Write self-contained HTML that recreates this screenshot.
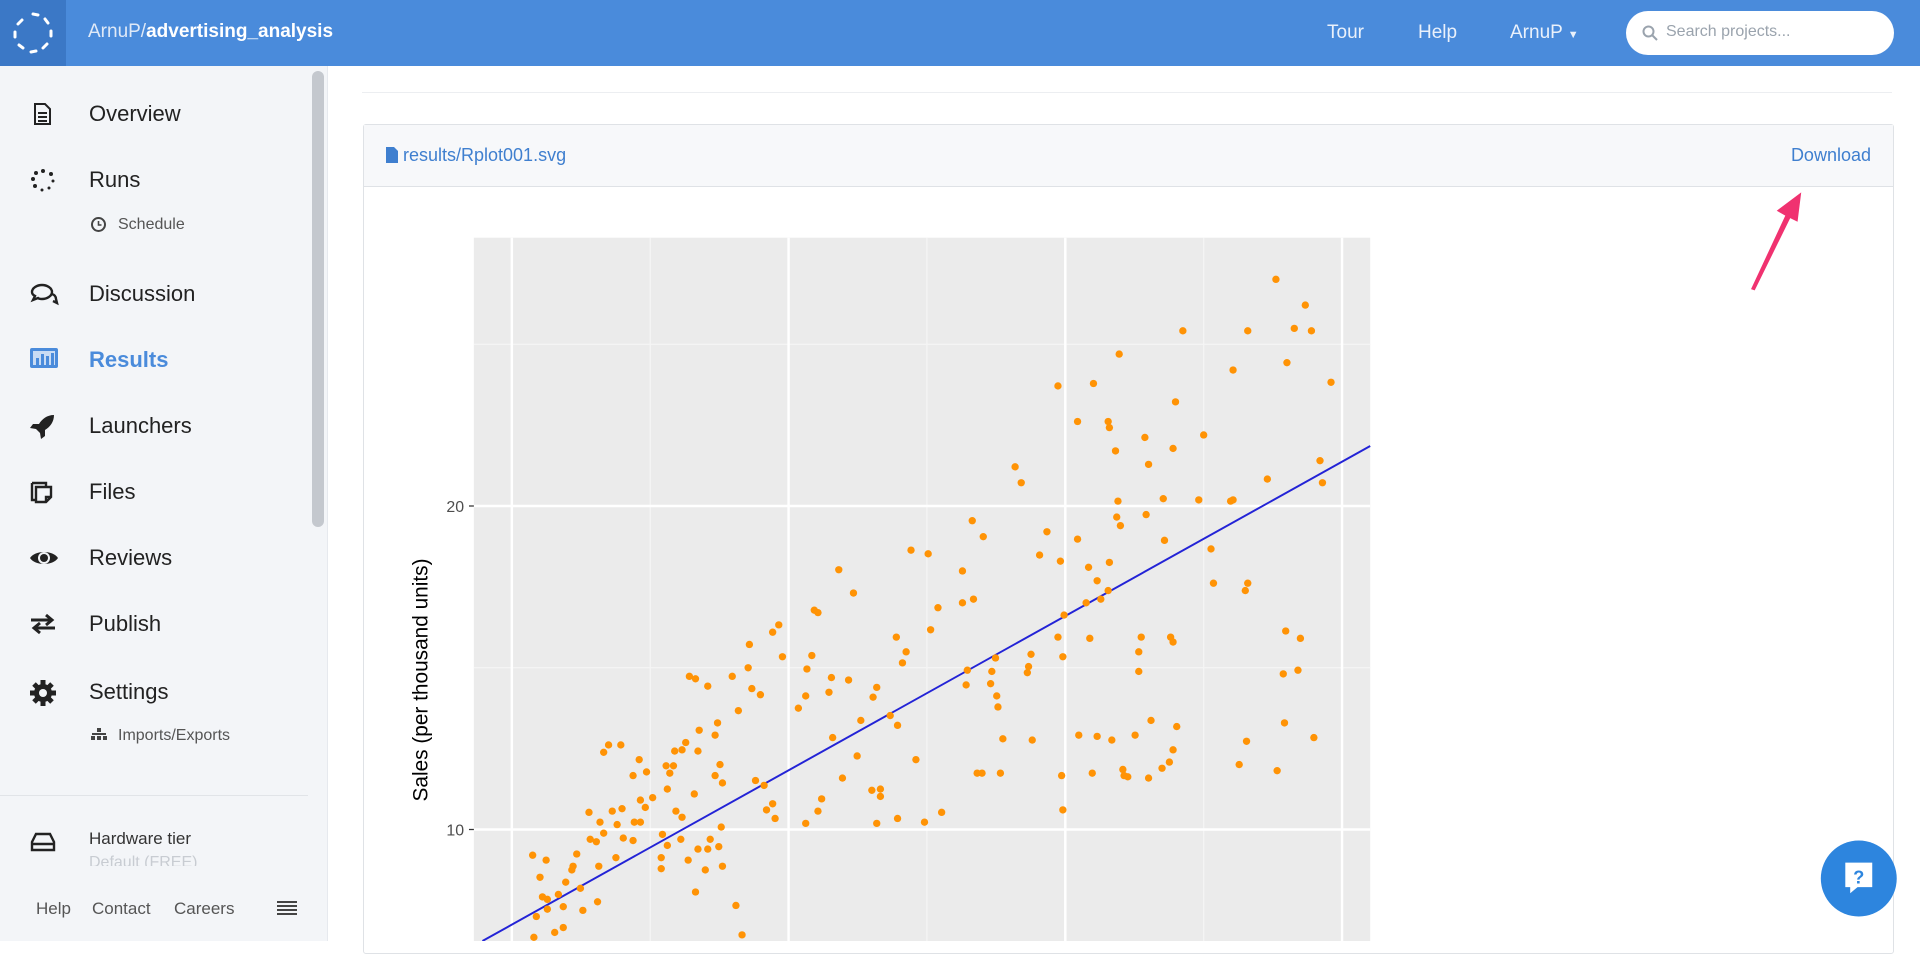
<!DOCTYPE html>
<html><head><meta charset="utf-8"><style>
*{margin:0;padding:0;box-sizing:border-box}
body{width:1920px;height:941px;overflow:hidden;background:#fff;font-family:"Liberation Sans",sans-serif;position:relative}
.hdr{position:absolute;left:0;top:0;width:1920px;height:66px;background:#4a8bdb}
.logo{position:absolute;left:0;top:0;width:66px;height:66px;background:#3b78c6}
.title{position:absolute;left:88px;top:21px;color:#dfe9f7;font-size:19px}
.title b{color:#fff}
.nav{position:absolute;top:22px;color:#eaf1fb;font-size:19px}
.search{position:absolute;left:1626px;top:11px;width:268px;height:44px;background:#fff;border-radius:22px;color:#9aa3ad;font-size:16px;padding:12px 0 0 40px}
.side{position:absolute;left:0;top:66px;width:328px;height:875px;background:#f3f5f8;border-right:1px solid #e6e9ee}
.scroll{position:absolute;left:312px;top:5px;width:12px;height:456px;background:#c4c8ce;border-radius:6px}
.item{position:absolute;left:89px;font-size:22px;color:#222}
.sub{position:absolute;left:118px;font-size:16px;color:#555}
.ic{position:absolute;left:28px}
.main-line{position:absolute;left:362px;top:92px;width:1530px;height:1px;background:#eceef1}
.card{position:absolute;left:363px;top:124px;width:1531px;height:830px;border:1px solid #dfe2e6;border-radius:3px}
.cardh{position:absolute;left:0;top:0;width:100%;height:62px;background:#f7f8fa;border-bottom:1px solid #dfe2e6}
.lnk{position:absolute;top:20px;color:#3f7fcf;font-size:18px}
</style></head><body>
<div class="hdr">
<div class="logo"><svg width="66" height="66" viewBox="0 0 66 66"><g stroke="#fff" stroke-width="3" stroke-linecap="round" fill="none"><path d="M33 14 l5 1M45 19 l3 4M51 31 l0 5M47 44 l-4 4M36 51 l-5 1M23 48 l-4-3M15 37 l0-5M18 24 l4-4"/></g></svg></div>
<div class="title">ArnuP/<b>advertising_analysis</b></div>
<div class="nav" style="left:1327px">Tour</div>
<div class="nav" style="left:1418px">Help</div>
<div class="nav" style="left:1510px">ArnuP <span style="font-size:11px">▼</span></div>
<div class="search"><svg style="position:absolute;left:16px;top:14px" width="16" height="16"><circle cx="6.5" cy="6.5" r="5" stroke="#9aa3ad" stroke-width="2" fill="none"/><path d="M10 10l5 5" stroke="#9aa3ad" stroke-width="2"/></svg>Search projects...</div>
</div>
<div class="side">
<div class="scroll"></div>
</div>
<svg class="ic" style="top:100px" width="28" height="28"><path d="M7 4h10l5 5v15H7z M10 13h9M10 17h9M10 21h9" stroke="#222" stroke-width="2" fill="none"/></svg>
<div class="item" style="top:101px">Overview</div>
<svg class="ic" style="top:167px" width="30" height="26"><g fill="#222"><circle cx="15" cy="4" r="2"/><circle cx="23" cy="7" r="2"/><circle cx="25" cy="14" r="1.5"/><circle cx="21" cy="21" r="1.5"/><circle cx="14" cy="23" r="1.5"/><circle cx="7" cy="19" r="2"/><circle cx="5" cy="12" r="2"/><circle cx="8" cy="6" r="2"/></g></svg>
<div class="item" style="top:167px">Runs</div>
<svg style="position:absolute;left:90px;top:216px" width="17" height="17"><circle cx="8.5" cy="8.5" r="6.5" stroke="#444" stroke-width="2" fill="none"/><path d="M8.5 5v4h3" stroke="#444" stroke-width="1.6" fill="none"/></svg>
<div class="sub" style="top:216px">Schedule</div>
<svg class="ic" style="top:282px" width="32" height="24"><path d="M4 10c0-4 5-7 10-7s10 3 10 7-5 7-10 7c-2 0-3 0-4-1l-5 2 2-4c-2-1-3-2-3-4z" stroke="#222" stroke-width="2.4" fill="none"/><path d="M24 12c3 1 4 3 4 5l1 4-4-2" stroke="#222" stroke-width="2.4" fill="none"/></svg>
<div class="item" style="top:281px">Discussion</div>
<svg class="ic" style="top:346px" width="32" height="26"><rect x="2" y="2" width="28" height="20" rx="2" fill="#4a8bdb"/><rect x="5" y="5" width="22" height="14" fill="#c9dcf4"/><g fill="#4a8bdb"><rect x="8" y="12" width="3" height="7"/><rect x="13" y="8" width="3" height="11"/><rect x="18" y="10" width="3" height="9"/><rect x="23" y="7" width="3" height="12"/></g></svg>
<div class="item" style="top:347px;color:#4a8bdb;font-weight:bold">Results</div>
<svg class="ic" style="top:412px" width="30" height="30"><path d="M26 3c-7 0-12 4-15 9H5l-3 4 6 1 4 4 1 6 4-3v-6c5-3 9-8 9-15z" fill="#222"/></svg>
<div class="item" style="top:413px">Launchers</div>
<svg class="ic" style="top:479px" width="28" height="28"><path d="M4 4h14v3M4 4v17h3M8 8h15v10l-5 5H8z M18 23v-5h5" stroke="#222" stroke-width="2.4" fill="none"/></svg>
<div class="item" style="top:479px">Files</div>
<svg class="ic" style="top:547px" width="32" height="22"><path d="M2 11C7 3 25 3 30 11 25 19 7 19 2 11z" fill="#222"/><circle cx="16" cy="11" r="6" fill="#f3f5f8"/><circle cx="16" cy="11" r="4" fill="#222"/></svg>
<div class="item" style="top:545px">Reviews</div>
<svg class="ic" style="top:612px" width="30" height="24"><path d="M3 8h20M18 3l6 5-6 5M27 16H7M12 11l-6 5 6 5" stroke="#222" stroke-width="3" fill="none"/></svg>
<div class="item" style="top:611px">Publish</div>
<svg class="ic" style="top:678px" width="30" height="30"><circle cx="15" cy="15" r="9" fill="#222"/><g stroke="#222" stroke-width="5"><path d="M15 2v26M2 15h26M6 6l18 18M24 6 6 24"/></g><circle cx="15" cy="15" r="4" fill="#f3f5f8"/></svg>
<div class="item" style="top:679px">Settings</div>
<svg style="position:absolute;left:90px;top:727px" width="18" height="16"><g fill="#444"><rect x="7" y="1" width="4" height="4"/><rect x="1" y="9" width="4" height="4"/><rect x="7" y="9" width="4" height="4"/><rect x="13" y="9" width="4" height="4"/><rect x="2" y="6" width="14" height="2"/></g></svg>
<div class="sub" style="top:727px">Imports/Exports</div>
<div style="position:absolute;left:0;top:795px;width:308px;height:1px;background:#e1e4e8"></div>
<svg class="ic" style="top:830px" width="30" height="24"><path d="M4 12l4-8h14l4 8v8H4z M4 14h22" stroke="#222" stroke-width="2.4" fill="none"/></svg>
<div style="position:absolute;left:89px;top:829px;font-size:17px;color:#333">Hardware tier</div>
<div style="position:absolute;left:89px;top:854px;font-size:16px;color:#c8ccd2;height:12px;overflow:hidden">Default (FREE)</div>
<div style="position:absolute;left:36px;top:899px;font-size:17px;color:#555">Help</div>
<div style="position:absolute;left:92px;top:899px;font-size:17px;color:#555">Contact</div>
<div style="position:absolute;left:174px;top:899px;font-size:17px;color:#555">Careers</div>
<svg style="position:absolute;left:277px;top:900px" width="20" height="16"><path d="M0 2h20M0 6h20M0 10h20M0 14h20" stroke="#444" stroke-width="2"/></svg>
<div class="main-line"></div>
<div class="card"><div class="cardh">
<div class="lnk" style="left:22px"><svg width="12" height="16" style="vertical-align:-2px"><path d="M0 0h8l4 4v12H0z" fill="#3f7fcf"/></svg> results/Rplot001.svg</div>
<div class="lnk" style="right:22px">Download</div>
</div></div>
<svg style="position:absolute;left:0;top:0" width="1920" height="941" viewBox="0 0 1568 768" preserveAspectRatio="none">
<rect x="387" y="194" width="732" height="580" fill="#ebebeb"/>
<g stroke="#f5f5f5" stroke-width="1"><path d="M531 194V768M757 194V768M983 194V768M387 545H1119M387 281H1119"/></g>
<g stroke="#fff" stroke-width="2"><path d="M418 194V768M644 194V768M870 194V768M1096 194V768M387 413H1119M387 677H1119"/></g>
<g stroke="#333" stroke-width="1"><path d="M383 413h4M383 677h4"/></g>
<text x="379" y="418" font-size="13" fill="#4d4d4d" text-anchor="end" font-family="Liberation Sans">20</text>
<text x="379" y="682" font-size="13" fill="#4d4d4d" text-anchor="end" font-family="Liberation Sans">10</text>
<text transform="translate(349,555) rotate(-90)" font-size="17" fill="#000" text-anchor="middle" font-family="Liberation Sans">Sales (per thousand units)</text>
<path d="M394 768L1119 364" stroke="#2323d6" stroke-width="1.6"/>
<g fill="#ff9305" id="pts">
<circle cx="1042" cy="228" r="3"/><circle cx="1066" cy="249" r="3"/><circle cx="1057" cy="268" r="3"/><circle cx="1071" cy="270" r="3"/><circle cx="1087" cy="312" r="3"/><circle cx="1051" cy="296" r="3"/><circle cx="966" cy="270" r="3"/><circle cx="1019" cy="270" r="3"/><circle cx="1007" cy="302" r="3"/><circle cx="914" cy="289" r="3"/><circle cx="864" cy="315" r="3"/><circle cx="893" cy="313" r="3"/><circle cx="880" cy="344" r="3"/><circle cx="905" cy="344" r="3"/><circle cx="906" cy="349" r="3"/><circle cx="935" cy="357" r="3"/><circle cx="960" cy="328" r="3"/><circle cx="983" cy="355" r="3"/><circle cx="958" cy="366" r="3"/><circle cx="911" cy="368" r="3"/><circle cx="938" cy="379" r="3"/><circle cx="1078" cy="376" r="3"/><circle cx="1080" cy="394" r="3"/><circle cx="829" cy="381" r="3"/><circle cx="834" cy="394" r="3"/><circle cx="1035" cy="391" r="3"/><circle cx="1007" cy="408" r="3"/><circle cx="979" cy="408" r="3"/><circle cx="951" cy="441" r="3"/><circle cx="855" cy="434" r="3"/><circle cx="880" cy="440" r="3"/><circle cx="913" cy="409" r="3"/><circle cx="915" cy="429" r="3"/><circle cx="912" cy="422" r="3"/><circle cx="936" cy="420" r="3"/><circle cx="950" cy="407" r="3"/><circle cx="906" cy="459" r="3"/><circle cx="905" cy="482" r="3"/><circle cx="896" cy="474" r="3"/><circle cx="899" cy="489" r="3"/><circle cx="887" cy="492" r="3"/><circle cx="889" cy="463" r="3"/><circle cx="866" cy="458" r="3"/><circle cx="849" cy="453" r="3"/><circle cx="869" cy="502" r="3"/><circle cx="864" cy="520" r="3"/><circle cx="842" cy="534" r="3"/><circle cx="840" cy="544" r="3"/><circle cx="839" cy="549" r="3"/><circle cx="868" cy="536" r="3"/><circle cx="890" cy="521" r="3"/><circle cx="892" cy="631" r="3"/><circle cx="908" cy="604" r="3"/><circle cx="917" cy="628" r="3"/><circle cx="921" cy="634" r="3"/><circle cx="927" cy="600" r="3"/><circle cx="930" cy="532" r="3"/><circle cx="932" cy="520" r="3"/><circle cx="956" cy="520" r="3"/><circle cx="958" cy="524" r="3"/><circle cx="989" cy="448" r="3"/><circle cx="991" cy="476" r="3"/><circle cx="1005" cy="409" r="3"/><circle cx="1019" cy="476" r="3"/><circle cx="1017" cy="482" r="3"/><circle cx="1060" cy="547" r="3"/><circle cx="1050" cy="515" r="3"/><circle cx="1062" cy="521" r="3"/><circle cx="1048" cy="550" r="3"/><circle cx="1049" cy="590" r="3"/><circle cx="1043" cy="629" r="3"/><circle cx="1018" cy="605" r="3"/><circle cx="1012" cy="624" r="3"/><circle cx="1073" cy="602" r="3"/><circle cx="930" cy="548" r="3"/><circle cx="940" cy="588" r="3"/><circle cx="938" cy="635" r="3"/><circle cx="958" cy="612" r="3"/><circle cx="955" cy="622" r="3"/><circle cx="961" cy="593" r="3"/><circle cx="949" cy="627" r="3"/><circle cx="918" cy="633" r="3"/><circle cx="896" cy="601" r="3"/><circle cx="881" cy="600" r="3"/><circle cx="867" cy="633" r="3"/><circle cx="868" cy="661" r="3"/><circle cx="843" cy="604" r="3"/><circle cx="817" cy="631" r="3"/><circle cx="819" cy="603" r="3"/><circle cx="802" cy="631" r="3"/><circle cx="815" cy="577" r="3"/><circle cx="814" cy="568" r="3"/><circle cx="809" cy="558" r="3"/><circle cx="810" cy="548" r="3"/><circle cx="813" cy="537" r="3"/><circle cx="790" cy="547" r="3"/><circle cx="789" cy="559" r="3"/><circle cx="798" cy="631" r="3"/><circle cx="795" cy="489" r="3"/><circle cx="786" cy="466" r="3"/><circle cx="794" cy="425" r="3"/><circle cx="803" cy="438" r="3"/><circle cx="786" cy="492" r="3"/><circle cx="766" cy="496" r="3"/><circle cx="744" cy="449" r="3"/><circle cx="758" cy="452" r="3"/><circle cx="760" cy="514" r="3"/><circle cx="740" cy="532" r="3"/><circle cx="737" cy="541" r="3"/><circle cx="732" cy="520" r="3"/><circle cx="733" cy="592" r="3"/><circle cx="727" cy="584" r="3"/><circle cx="716" cy="561" r="3"/><circle cx="713" cy="569" r="3"/><circle cx="719" cy="650" r="3"/><circle cx="733" cy="668" r="3"/><circle cx="716" cy="672" r="3"/><circle cx="748" cy="620" r="3"/><circle cx="755" cy="671" r="3"/><circle cx="769" cy="663" r="3"/><circle cx="697" cy="484" r="3"/><circle cx="685" cy="465" r="3"/><circle cx="703" cy="588" r="3"/><circle cx="700" cy="617" r="3"/><circle cx="679" cy="553" r="3"/><circle cx="677" cy="565" r="3"/><circle cx="663" cy="535" r="3"/><circle cx="668" cy="500" r="3"/><circle cx="665" cy="498" r="3"/><circle cx="659" cy="546" r="3"/><circle cx="658" cy="568" r="3"/><circle cx="652" cy="578" r="3"/><circle cx="671" cy="652" r="3"/><circle cx="668" cy="662" r="3"/><circle cx="688" cy="635" r="3"/><circle cx="693" cy="555" r="3"/><circle cx="719" cy="644" r="3"/><circle cx="712" cy="645" r="3"/><circle cx="680" cy="602" r="3"/><circle cx="639" cy="536" r="3"/><circle cx="636" cy="510" r="3"/><circle cx="631" cy="516" r="3"/><circle cx="621" cy="567" r="3"/><circle cx="614" cy="562" r="3"/><circle cx="611" cy="545" r="3"/><circle cx="612" cy="526" r="3"/><circle cx="598" cy="552" r="3"/><circle cx="603" cy="580" r="3"/><circle cx="586" cy="590" r="3"/><circle cx="578" cy="560" r="3"/><circle cx="557" cy="612" r="3"/><circle cx="560" cy="606" r="3"/><circle cx="563" cy="552" r="3"/><circle cx="568" cy="554" r="3"/><circle cx="584" cy="600" r="3"/><circle cx="588" cy="624" r="3"/><circle cx="590" cy="639" r="3"/><circle cx="584" cy="633" r="3"/><circle cx="580" cy="685" r="3"/><circle cx="578" cy="693" r="3"/><circle cx="545" cy="644" r="3"/><circle cx="544" cy="625" r="3"/><circle cx="550" cy="625" r="3"/><circle cx="541" cy="681" r="3"/><circle cx="547" cy="631" r="3"/><circle cx="522" cy="620" r="3"/><circle cx="517" cy="633" r="3"/><circle cx="493" cy="614" r="3"/><circle cx="493" cy="680" r="3"/><circle cx="497" cy="608" r="3"/><circle cx="507" cy="608" r="3"/><circle cx="528" cy="630" r="3"/><circle cx="533" cy="651" r="3"/><circle cx="551" cy="613" r="3"/><circle cx="552" cy="662" r="3"/><circle cx="556" cy="685" r="3"/><circle cx="570" cy="693" r="3"/><circle cx="562" cy="702" r="3"/><circle cx="568" cy="728" r="3"/><circle cx="576" cy="710" r="3"/><circle cx="589" cy="675" r="3"/><circle cx="587" cy="691" r="3"/><circle cx="590" cy="707" r="3"/><circle cx="601" cy="739" r="3"/><circle cx="606" cy="763" r="3"/><circle cx="617" cy="637" r="3"/><circle cx="624" cy="641" r="3"/><circle cx="631" cy="656" r="3"/><circle cx="633" cy="668" r="3"/><circle cx="626" cy="661" r="3"/><circle cx="658" cy="672" r="3"/><circle cx="571" cy="596" r="3"/><circle cx="570" cy="613" r="3"/><circle cx="567" cy="648" r="3"/><circle cx="557" cy="667" r="3"/><circle cx="545" cy="690" r="3"/><circle cx="540" cy="700" r="3"/><circle cx="527" cy="659" r="3"/><circle cx="523" cy="671" r="3"/><circle cx="503" cy="700" r="3"/><circle cx="487" cy="687" r="3"/><circle cx="482" cy="685" r="3"/><circle cx="471" cy="697" r="3"/><circle cx="468" cy="707" r="3"/><circle cx="460" cy="740" r="3"/><circle cx="447" cy="734" r="3"/><circle cx="453" cy="761" r="3"/><circle cx="460" cy="757" r="3"/><circle cx="438" cy="748" r="3"/><circle cx="436" cy="765" r="3"/><circle cx="447" cy="742" r="3"/><circle cx="435" cy="698" r="3"/><circle cx="441" cy="716" r="3"/><circle cx="446" cy="702" r="3"/><circle cx="443" cy="732" r="3"/><circle cx="456" cy="730" r="3"/><circle cx="462" cy="720" r="3"/><circle cx="467" cy="710" r="3"/><circle cx="474" cy="725" r="3"/><circle cx="476" cy="743" r="3"/><circle cx="488" cy="736" r="3"/><circle cx="489" cy="707" r="3"/><circle cx="490" cy="671" r="3"/><circle cx="500" cy="662" r="3"/><circle cx="508" cy="660" r="3"/><circle cx="504" cy="673" r="3"/><circle cx="509" cy="684" r="3"/><circle cx="517" cy="686" r="3"/><circle cx="518" cy="671" r="3"/><circle cx="540" cy="709" r="3"/><circle cx="523" cy="653" r="3"/><circle cx="481" cy="663" r="3"/>
</g>
<path d="M1430 236L1458 176L1451 172L1471 157L1468 181L1462 178L1433 237z" fill="#f03270"/>
<circle cx="1518" cy="717" r="31" fill="#2d85de"/>
<path d="M1507 704h22v20h-12l-6 5v-5h-4z" fill="#fff"/>
<text x="1518" y="721" font-size="15" fill="#2d85de" text-anchor="middle" font-weight="bold" font-family="Liberation Sans">?</text>
</svg>
</body></html>
